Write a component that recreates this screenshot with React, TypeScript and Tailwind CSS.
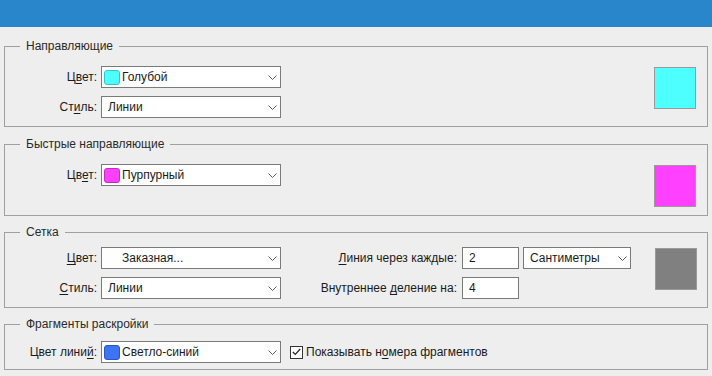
import React from "react";

function Chevron() {
  return (
    <svg width="9" height="5" viewBox="0 0 9 5" className="shrink-0">
      <polyline points="0.5,0.5 4.5,4.5 8.5,0.5" fill="none" stroke="#5a5a5a" strokeWidth="1" />
    </svg>
  );
}

function K({ children }: { children: React.ReactNode }) {
  return <span className="underline underline-offset-2 decoration-1">{children}</span>;
}

function Select({
  width,
  text,
  swatch,
  indent,
}: {
  width: string;
  text: string;
  swatch?: [string, string];
  indent?: boolean;
}) {
  return (
    <div className={`${width} h-[22px] shrink-0 border border-[#7a7a7a] bg-white flex items-center pr-[3px]`}>
      {swatch ? (
        <span
          className="ml-[2px] mr-[2px] h-[15px] w-[16px] rounded-[3px] border"
          style={{ background: swatch[0], borderColor: swatch[1] }}
        />
      ) : indent ? (
        <span className="ml-[2px] mr-[2px] w-[16px]" />
      ) : (
        <span className="w-[6px]" />
      )}
      <span className="flex-1 truncate">{text}</span>
      <Chevron />
    </div>
  );
}

function Label({ children, w = "w-[96px]" }: { children: React.ReactNode; w?: string }) {
  return <span className={`${w} shrink-0 text-right pr-[4px]`}>{children}</span>;
}

function Swatch({ color }: { color: string }) {
  return <div className="mt-[1px] h-[42px] w-[42px] shrink-0 border border-[#9a9a9a]" style={{ background: color }} />;
}

function Input({ value }: { value: string }) {
  return (
    <div className="h-[22px] w-[57px] shrink-0 border border-[#7a7a7a] bg-white flex items-center pl-[6px]">{value}</div>
  );
}

export default function App() {
  return (
    <div className="h-[376px] w-[712px] overflow-hidden bg-[#eeeeee] font-['Liberation_Sans',Arial,sans-serif] text-[12px] text-[#1b1b1b]">
      <div className="h-[27px] bg-[#2a86cb]" />

      <fieldset className="mx-[4px] mt-[12px] border border-[#a0a0a0] pt-[13px] pb-[8px] pr-[11px]">
        <legend className="ml-[15px] px-[6px] leading-[14px] text-[#2a2a2a]">Направляющие</legend>
        <div className="flex items-start">
          <div className="flex flex-col gap-[8px]">
            <div className="flex items-center">
              <Label>
                Ц<K>в</K>ет:
              </Label>
              <Select width="w-[180px]" text="Голубой" swatch={["#4dffff", "#2fc8c8"]} />
            </div>
            <div className="flex items-center">
              <Label>
                Ст<K>и</K>ль:
              </Label>
              <Select width="w-[180px]" text="Линии" />
            </div>
          </div>
          <div className="flex-1" />
          <Swatch color="#4dffff" />
        </div>
      </fieldset>

      <fieldset className="mx-[4px] mt-[10px] border border-[#a0a0a0] pt-[13px] pb-[8px] pr-[11px]">
        <legend className="ml-[15px] px-[6px] leading-[14px] text-[#2a2a2a]">Быстрые направляющие</legend>
        <div className="flex items-start">
          <div className="flex items-center">
            <Label>
              Цв<K>е</K>т:
            </Label>
            <Select width="w-[180px]" text="Пурпурный" swatch={["#ff40ff", "#c828c8"]} />
          </div>
          <div className="flex-1" />
          <Swatch color="#ff40ff" />
        </div>
      </fieldset>

      <fieldset className="mx-[4px] mt-[9px] border border-[#a0a0a0] pt-[8px] pb-[8px] pr-[10px]">
        <legend className="ml-[15px] px-[6px] leading-[14px] text-[#2a2a2a]">Сетка</legend>
        <div className="flex items-start">
          <div className="flex flex-col gap-[8px]">
            <div className="flex items-center">
              <Label>
                <K>Ц</K>вет:
              </Label>
              <Select width="w-[180px]" text="Заказная..." indent />
              <Label w="w-[181px] pr-[5px]">
                <K>Л</K>иния через каждые:
              </Label>
              <Input value="2" />
              <div className="ml-[4px]">
                <Select width="w-[108px]" text="Сантиметры" />
              </div>
            </div>
            <div className="flex items-center">
              <Label>
                <K>С</K>тиль:
              </Label>
              <Select width="w-[180px]" text="Линии" />
              <Label w="w-[181px] pr-[5px]">
                Внутреннее <K>д</K>еление на:
              </Label>
              <Input value="4" />
            </div>
          </div>
          <div className="flex-1" />
          <Swatch color="#808080" />
        </div>
      </fieldset>

      <fieldset className="mx-[4px] mt-[9px] border border-[#a0a0a0] pt-[10px] pb-[6px]">
        <legend className="ml-[15px] px-[6px] leading-[14px] text-[#2a2a2a]">Фрагменты раскройки</legend>
        <div className="flex items-center">
          <Label>
            Цвет лини<K>й</K>:
          </Label>
          <Select width="w-[180px]" text="Светло-синий" swatch={["#3d73f5", "#2a55c8"]} />
          <span className="ml-[9px] mr-[3px] flex h-[13px] w-[13px] items-center justify-center border border-[#333333] bg-white">
            <svg width="9" height="8" viewBox="0 0 9 8">
              <polyline points="0.8,4 3.3,6.5 8.2,1" fill="none" stroke="#222" strokeWidth="1.2" />
            </svg>
          </span>
          <span>
            Показывать н<K>о</K>мера фрагментов
          </span>
        </div>
      </fieldset>
    </div>
  );
}
